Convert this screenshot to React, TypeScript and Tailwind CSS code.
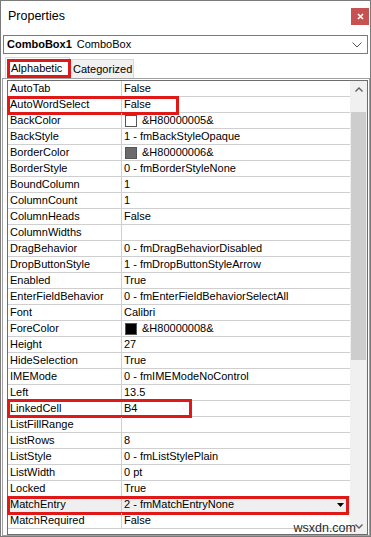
import React from "react";

type Row = { name: string; value: string; swatch?: string; red?: { top: number; width: number }; selected?: boolean };

const rows: Row[] = [
  { name: "AutoTab", value: "False" },
  { name: "AutoWordSelect", value: "False", red: { top: -1, width: 172 } },
  { name: "BackColor", value: "&H80000005&", swatch: "#ffffff" },
  { name: "BackStyle", value: "1 - fmBackStyleOpaque" },
  { name: "BorderColor", value: "&H80000006&", swatch: "#6b6b6b" },
  { name: "BorderStyle", value: "0 - fmBorderStyleNone" },
  { name: "BoundColumn", value: "1" },
  { name: "ColumnCount", value: "1" },
  { name: "ColumnHeads", value: "False" },
  { name: "ColumnWidths", value: "" },
  { name: "DragBehavior", value: "0 - fmDragBehaviorDisabled" },
  { name: "DropButtonStyle", value: "1 - fmDropButtonStyleArrow" },
  { name: "Enabled", value: "True" },
  { name: "EnterFieldBehavior", value: "0 - fmEnterFieldBehaviorSelectAll" },
  { name: "Font", value: "Calibri" },
  { name: "ForeColor", value: "&H80000008&", swatch: "#000000" },
  { name: "Height", value: "27" },
  { name: "HideSelection", value: "True" },
  { name: "IMEMode", value: "0 - fmIMEModeNoControl" },
  { name: "Left", value: "13.5" },
  { name: "LinkedCell", value: "B4", red: { top: -2, width: 185 } },
  { name: "ListFillRange", value: "" },
  { name: "ListRows", value: "8" },
  { name: "ListStyle", value: "0 - fmListStylePlain" },
  { name: "ListWidth", value: "0 pt" },
  { name: "Locked", value: "True" },
  { name: "MatchEntry", value: "2 - fmMatchEntryNone", selected: true, red: { top: -1, width: 342 } },
  { name: "MatchRequired", value: "False" },
];

export default function App() {
  return (
    <div className="w-[371px] h-[537px] bg-white border border-[#7a7a7a] relative flex flex-col overflow-hidden font-['Liberation_Sans',Arial,sans-serif] text-[11px] text-black leading-none">
      {/* Title bar */}
      <div className="h-[34px] flex items-start justify-between shrink-0">
        <span className="ml-[7px] mt-[9px] text-[12.5px]">Properties</span>
        <div className="w-[18px] h-[17px] mt-[7px] mr-[1px] bg-[#c75050] flex items-center justify-center">
          <svg width="7" height="7" viewBox="0 0 7 7">
            <path d="M1 1L6 6M6 1L1 6" stroke="white" strokeWidth="1.6" />
          </svg>
        </div>
      </div>

      {/* Combo box */}
      <div className="mx-[2px] h-[19px] border border-[#7a7a7a] flex items-center px-[3px] shrink-0">
        <span className="font-bold text-[11px]">ComboBox1</span>
        <span className="ml-[5px] text-[11px]">ComboBox</span>
        <svg className="ml-auto mr-[2px]" width="10" height="6" viewBox="0 0 10 6">
          <path d="M0.5 0.5L5 5L9.5 0.5" stroke="#555" strokeWidth="1" fill="none" />
        </svg>
      </div>

      {/* Tabs */}
      <div className="mt-[3px] h-[21px] flex items-end ml-[4px] shrink-0">
        <div className="relative w-[65px] h-[21px] bg-white border-t border-l border-r border-[#d9d9d9] flex items-center pl-[5px]">
          <span>Alphabetic</span>
          <div className="absolute left-[1px] top-[1px] w-[64px] h-[19px] border-[3px] border-[#e01818]" />
        </div>
        <div className="w-[64px] h-[19px] bg-[#f0f0f0] border-t border-r border-[#d9d9d9] flex items-center pl-[3px]">
          <span>Categorized</span>
        </div>
      </div>

      {/* Grid frame */}
      <div className="flex-1 ml-[1px] mr-[0px] border border-[#a0a0a0] pt-[1px] pl-[4px] pr-[1px] min-h-0 flex">
        <div className="flex-1 border border-[#6d6d6d] flex min-h-0">
          <div className="flex-1 flex flex-col">
            {rows.map((r) => (
              <div
                key={r.name}
                className={`relative h-[16px] flex border-b border-[#cfcfcf] ${r.selected ? "bg-[#efefef]" : ""}`}
              >
                <div className="w-[114px] h-full border-r border-[#cfcfcf] flex items-center pl-[2px] whitespace-nowrap">
                  {r.name}
                </div>
                <div className="flex-1 h-full flex items-center pl-[2px] whitespace-nowrap">
                  {r.swatch && (
                    <span
                      className="inline-block w-[12px] h-[12px] border border-[#555] mr-[5px] ml-[1px]"
                      style={{ backgroundColor: r.swatch }}
                    />
                  )}
                  {r.value}
                  {r.selected && (
                    <svg className="ml-auto mr-[6px]" width="7" height="4" viewBox="0 0 7 4">
                      <path d="M0 0H7L3.5 4Z" fill="#000" />
                    </svg>
                  )}
                </div>
                {r.red && (
                  <div
                    className="absolute left-[-1px] h-[19px] border-[3px] border-[#e01818]"
                    style={{ top: r.red.top, width: r.red.width }}
                  />
                )}
              </div>
            ))}
          </div>
          {/* Scrollbar */}
          <div className="w-[17px] bg-[#f0f0f0] flex flex-col items-center">
            <div className="h-[16px] flex items-center justify-center">
              <svg width="8" height="5" viewBox="0 0 8 5">
                <path d="M0.5 4.5L4 1L7.5 4.5" stroke="#606060" strokeWidth="1.4" fill="none" />
              </svg>
            </div>
            <div className="mt-[15px] w-[15px] h-[248px] bg-[#cdcdcd]" />
            <div className="flex-1" />
            <div className="h-[16px] flex items-center justify-center">
              <svg width="8" height="5" viewBox="0 0 8 5">
                <path d="M0.5 0.5L4 4L7.5 0.5" stroke="#606060" strokeWidth="1.4" fill="none" />
              </svg>
            </div>
          </div>
        </div>
      </div>

      {/* Watermark */}
      <div className="absolute right-[14px] bottom-[2px] text-[12.5px] text-[#2a2a2a] font-['Liberation_Sans',Arial,sans-serif]">
        wsxdn.com
      </div>
    </div>
  );
}
